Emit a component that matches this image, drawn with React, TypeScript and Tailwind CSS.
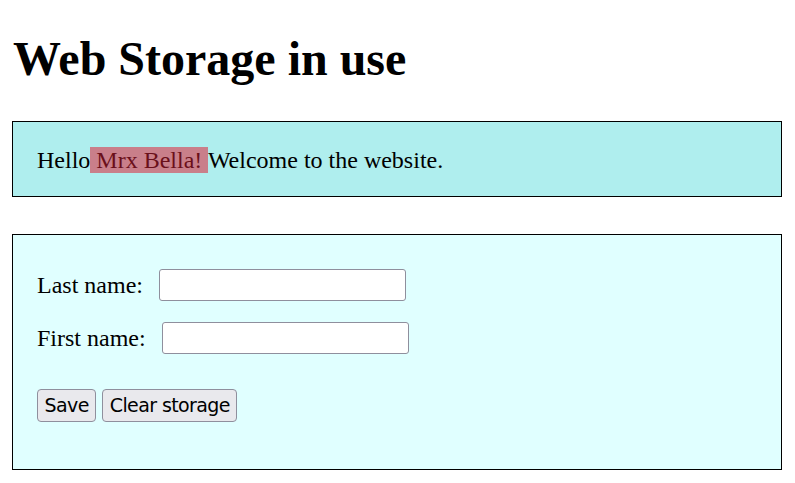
export default function App() {
  return (
    <div className="min-h-screen bg-white pl-[12px] pr-[13px] pt-[33px] font-['Liberation_Serif',serif] text-black">
      <h1 className="text-[48px] font-bold leading-[52px] ml-[1px]">Web Storage in use</h1>

      <div className="mt-[36px] border border-black bg-[#afeeee] px-[24px] pt-[23px] pb-[21px] text-[24px] leading-[30px]">
        Hello<span className="bg-[#c97f8a] text-[#6b0f1a]"> Mrx Bella! </span>Welcome to the website.
      </div>

      <div className="mt-[37px] h-[236px] border border-black bg-[#e0ffff] px-[24px] pt-[34px]">
        <div className="flex items-center text-[24px] leading-[32px]">
          <span>Last name:</span>
          <input type="text" className="ml-[16px] h-[32px] w-[247px] rounded-[3px] border border-[#8f8f9d] bg-white" />
        </div>
        <div className="mt-[21px] flex items-center text-[24px] leading-[32px]">
          <span>First name:</span>
          <input type="text" className="ml-[16px] h-[32px] w-[247px] rounded-[3px] border border-[#8f8f9d] bg-white" />
        </div>
        <div className="mt-[35px] flex gap-[6px] font-['DejaVu_Sans',sans-serif] text-[19px]">
          <button className="h-[33px] rounded-[4px] border border-[#8f8f9d] bg-[#e9e9ed] px-[6.5px] tracking-[-0.6px]">Save</button>
          <button className="h-[33px] rounded-[4px] border border-[#8f8f9d] bg-[#e9e9ed] px-[6.5px] tracking-[-0.6px]">Clear storage</button>
        </div>
      </div>
    </div>
  );
}
